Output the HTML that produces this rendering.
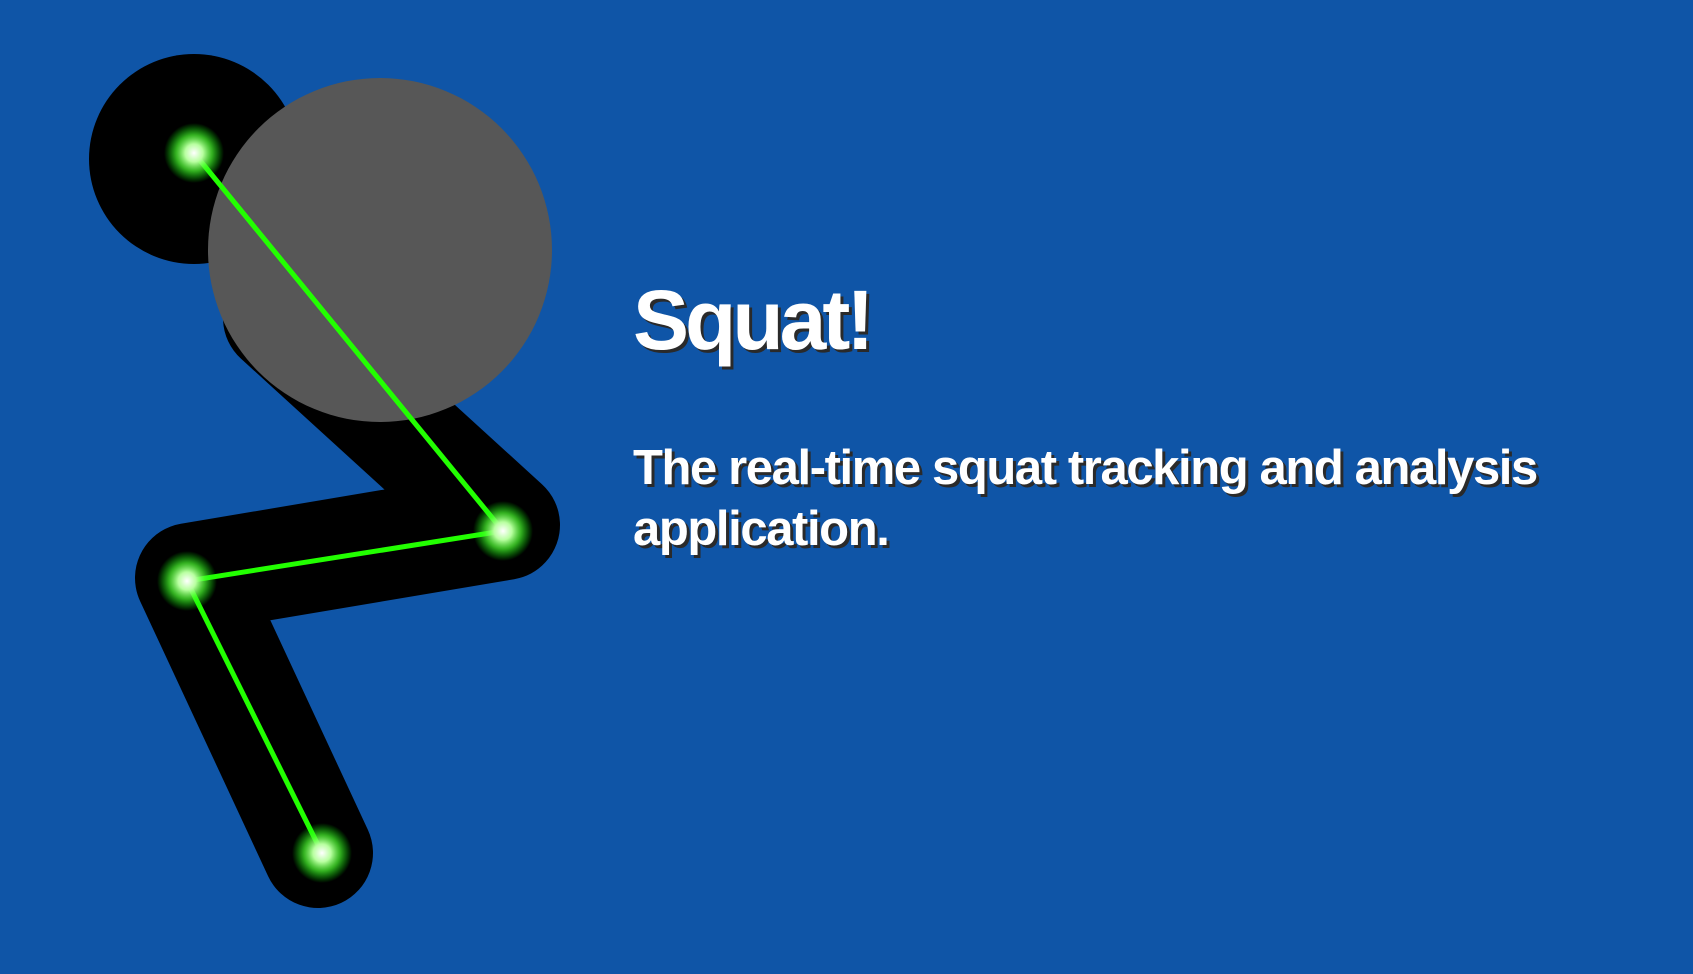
<!DOCTYPE html>
<html><head><style>
html,body{margin:0;padding:0;width:1693px;height:974px;overflow:hidden;background:#0F55A7;}
svg{position:absolute;left:0;top:0;}
.t{position:absolute;left:633px;color:#fff;font-family:"Liberation Sans",sans-serif;font-weight:bold;text-shadow:3px 3px 0 #2a2a2a;white-space:nowrap;}
#h{top:270px;font-size:84px;line-height:100px;letter-spacing:-4px;}
#p{top:438px;font-size:49px;line-height:61px;letter-spacing:-1.4px;}
</style></head><body>
<svg width="1693" height="974" viewBox="0 0 1693 974">
<defs>
<radialGradient id="g"><stop offset="0" stop-color="#fff"/><stop offset="0.3" stop-color="#b8ffa0"/><stop offset="0.6" stop-color="#4cff30" stop-opacity="0.7"/><stop offset="1" stop-color="#00ff00" stop-opacity="0"/></radialGradient>
</defs>
<circle cx="194" cy="159" r="105" fill="#000"/>
<polyline points="278,318 505,525 190,578 318,853" fill="none" stroke="#000" stroke-width="110" stroke-linejoin="round" stroke-linecap="round"/>
<circle cx="380" cy="250" r="172" fill="#575757"/>
<polyline points="194,153 503,531 187,581 322,853" fill="none" stroke="#22ff00" stroke-width="5"/>
<circle cx="194" cy="153" r="30" fill="url(#g)"/>
<circle cx="503" cy="531" r="30" fill="url(#g)"/>
<circle cx="187" cy="581" r="30" fill="url(#g)"/>
<circle cx="322" cy="853" r="30" fill="url(#g)"/>
</svg>
<div class="t" id="h">Squat!</div>
<div class="t" id="p">The real-time squat tracking and analysis<br>application.</div>
</body></html>
